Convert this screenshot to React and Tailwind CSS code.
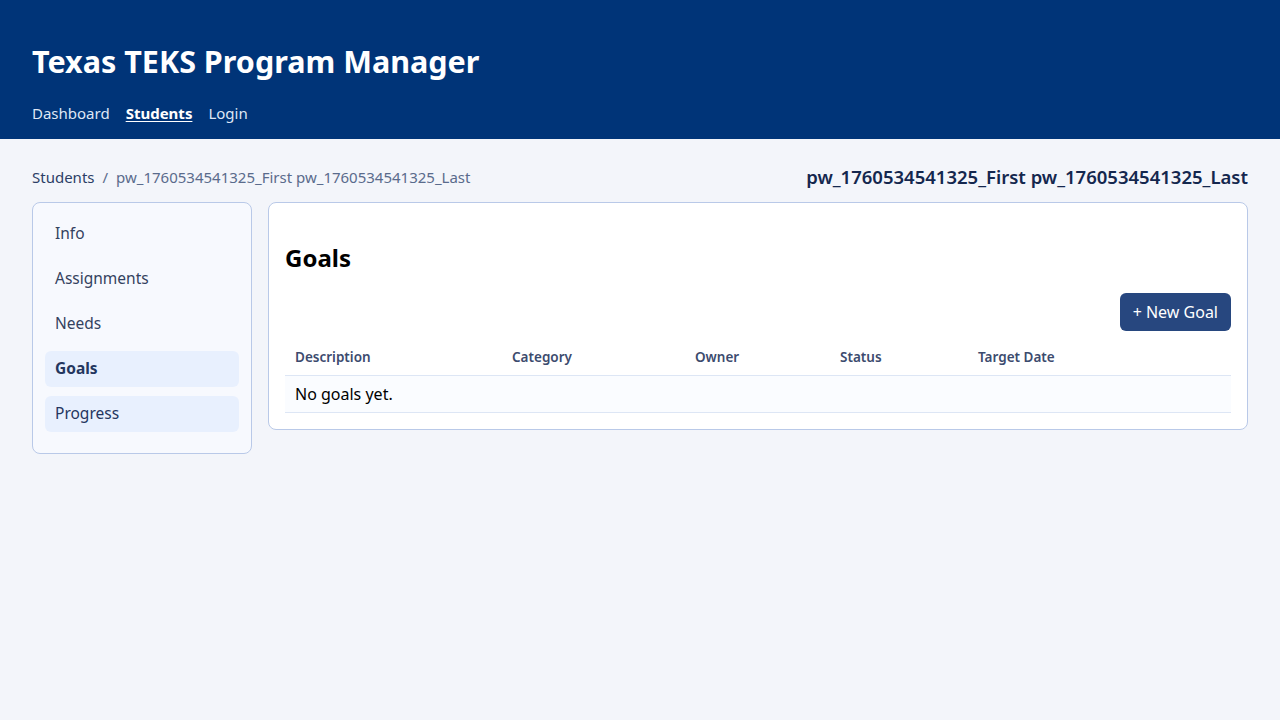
export default function App() {
  const font = { fontFamily: '"Segoe UI", "Noto Sans", "Open Sans", sans-serif' };
  const tabs = ["Info", "Assignments", "Needs", "Goals", "Progress"];
  const cols = [
    { label: "Description", w: "w-[217px]" },
    { label: "Category", w: "w-[183px]" },
    { label: "Owner", w: "w-[145px]" },
    { label: "Status", w: "w-[138px]" },
    { label: "Target Date", w: "" },
  ];

  return (
    <div className="min-h-screen bg-[#f3f5fa] text-[#111]" style={font}>
      <header className="bg-[#003478] px-8 pt-[38px] pb-[13px] text-white">
        <h1 className="text-[30.5px] font-bold leading-[46px]">Texas TEKS Program Manager</h1>
        <nav className="mt-[16px] flex gap-4 text-[15px] leading-[26px] text-[#dfe7f5]">
          <a>Dashboard</a>
          <a className="font-bold text-white underline underline-offset-2">Students</a>
          <a>Login</a>
        </nav>
      </header>

      <main className="px-8 pt-[24px]">
        <div className="mb-[11px] flex items-center justify-between">
          <div className="text-[15px] text-[#5a6b8c]">
            <span className="text-[#2c3e66]">Students</span>
            <span className="mx-2">/</span>
            <span>pw_1760534541325_First pw_1760534541325_Last</span>
          </div>
          <h2 className="text-[18.5px] font-semibold text-[#14274e]">pw_1760534541325_First pw_1760534541325_Last</h2>
        </div>

        <div className="flex items-start gap-4">
          <aside className="w-[220px] shrink-0 rounded-lg border border-[#b9c9e8] bg-[#f7f9fe] px-3 pt-[13px] pb-[21px]">
            <ul className="flex flex-col gap-[9px]">
              {tabs.map((t) => {
                const active = t === "Goals" || t === "Progress";
                return (
                  <li
                    key={t}
                    className={
                      "flex h-9 items-center rounded-md px-[10px] text-[15.5px] " +
                      (active ? "bg-[#e8f0fe] text-[#24365f] " : "text-[#34425f] ") +
                      (t === "Goals" ? "font-bold" : "")
                    }
                  >
                    {t}
                  </li>
                );
              })}
            </ul>
          </aside>

          <section className="flex-1 rounded-lg border border-[#b9c9e8] bg-white px-4 pt-[40px] pb-4">
            <h2 className="text-2xl font-bold leading-[30px] text-black">Goals</h2>
            <div className="mt-[20px] flex justify-end">
              <button className="h-[38px] rounded-md bg-[#27477f] px-[13px] text-base text-white">+ New Goal</button>
            </div>
            <table className="mt-[10px] w-full border-collapse text-left">
              <thead>
                <tr className="border-b border-[#dde6f5]">
                  {cols.map((c) => (
                    <th key={c.label} className={"px-[10px] pb-[8px] pt-[6px] text-[13.5px] font-semibold text-[#3c4b6e] " + c.w}>
                      {c.label}
                    </th>
                  ))}
                </tr>
              </thead>
              <tbody>
                <tr className="border-b border-[#dde6f5] bg-[#fafcff]">
                  <td colSpan={5} className="h-[37px] px-[10px] text-base text-black">
                    No goals yet.
                  </td>
                </tr>
              </tbody>
            </table>
          </section>
        </div>
      </main>
    </div>
  );
}
